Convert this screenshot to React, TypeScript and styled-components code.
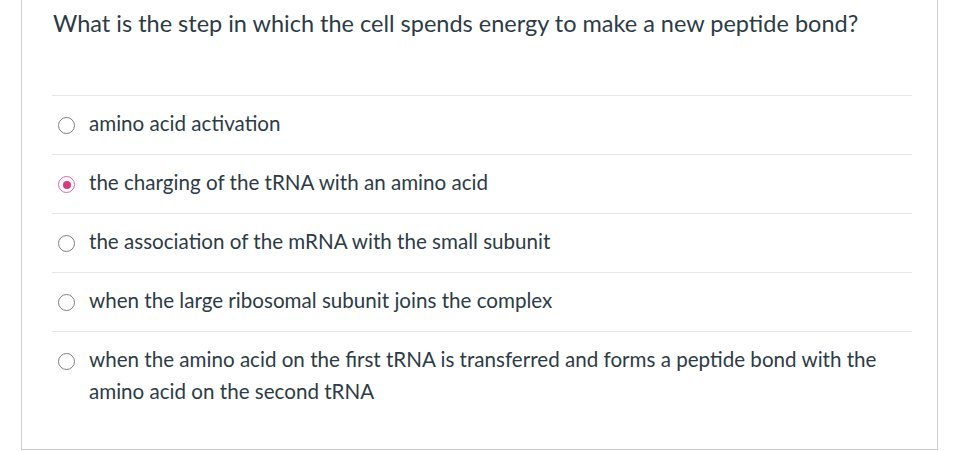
import React from 'react';
import styled, { createGlobalStyle } from 'styled-components';

const GlobalStyle = createGlobalStyle`
  html, body {
    margin: 0;
    padding: 0;
    background: #ffffff;
  }
  body {
    font-family: Lato, 'Open Sans', sans-serif;
    color: #2d3b45;
  }
`;

const Page = styled.div`
  width: 980px;
  height: 451px;
  overflow: hidden;
`;

const Card = styled.div`
  box-sizing: border-box;
  margin-left: 21px;
  width: 917px;
  height: 450px;
  border: 1px solid #c7cdd1;
  border-top: none;
  padding: 7px 25px 0 30px;
`;

const Question = styled.div`
  font-size: 23.5px;
  line-height: 32px;
  padding-left: 1px;
  margin-bottom: 56px;
`;

const Answers = styled.div`
  display: flex;
  flex-direction: column;
`;

const Answer = styled.label`
  display: flex;
  align-items: flex-start;
  gap: 14px;
  border-top: 1px solid #e4e7e9;
  padding: 11px 30px 15px 6px;
  font-size: 20.6px;
  line-height: 32px;
  cursor: pointer;
`;

const Radio = styled.span<{ $checked?: boolean }>`
  flex: none;
  box-sizing: border-box;
  width: 17px;
  height: 17px;
  margin-top: 10px;
  border-radius: 50%;
  border: 1.5px solid ${({ $checked }) => ($checked ? '#e5649f' : '#7b7f82')};
  display: flex;
  align-items: center;
  justify-content: center;

  &::after {
    content: '';
    width: 8px;
    height: 8px;
    border-radius: 50%;
    background: ${({ $checked }) => ($checked ? '#d13c7e' : 'transparent')};
  }
`;

const Label = styled.span`
  flex: 1;
`;

const answers = [
  'amino acid activation',
  'the charging of the tRNA with an amino acid',
  'the association of the mRNA with the small subunit',
  'when the large ribosomal subunit joins the complex',
  'when the amino acid on the first tRNA is transferred and forms a peptide bond with the amino acid on the second tRNA',
];

export default function App() {
  return (
    <Page>
      <GlobalStyle />
      <Card>
        <Question>
          What is the step in which the cell spends energy to make a new peptide bond?
        </Question>
        <Answers>
          {answers.map((text, i) => (
            <Answer key={i}>
              <Radio $checked={i === 1} />
              <Label>{text}</Label>
            </Answer>
          ))}
        </Answers>
      </Card>
    </Page>
  );
}
